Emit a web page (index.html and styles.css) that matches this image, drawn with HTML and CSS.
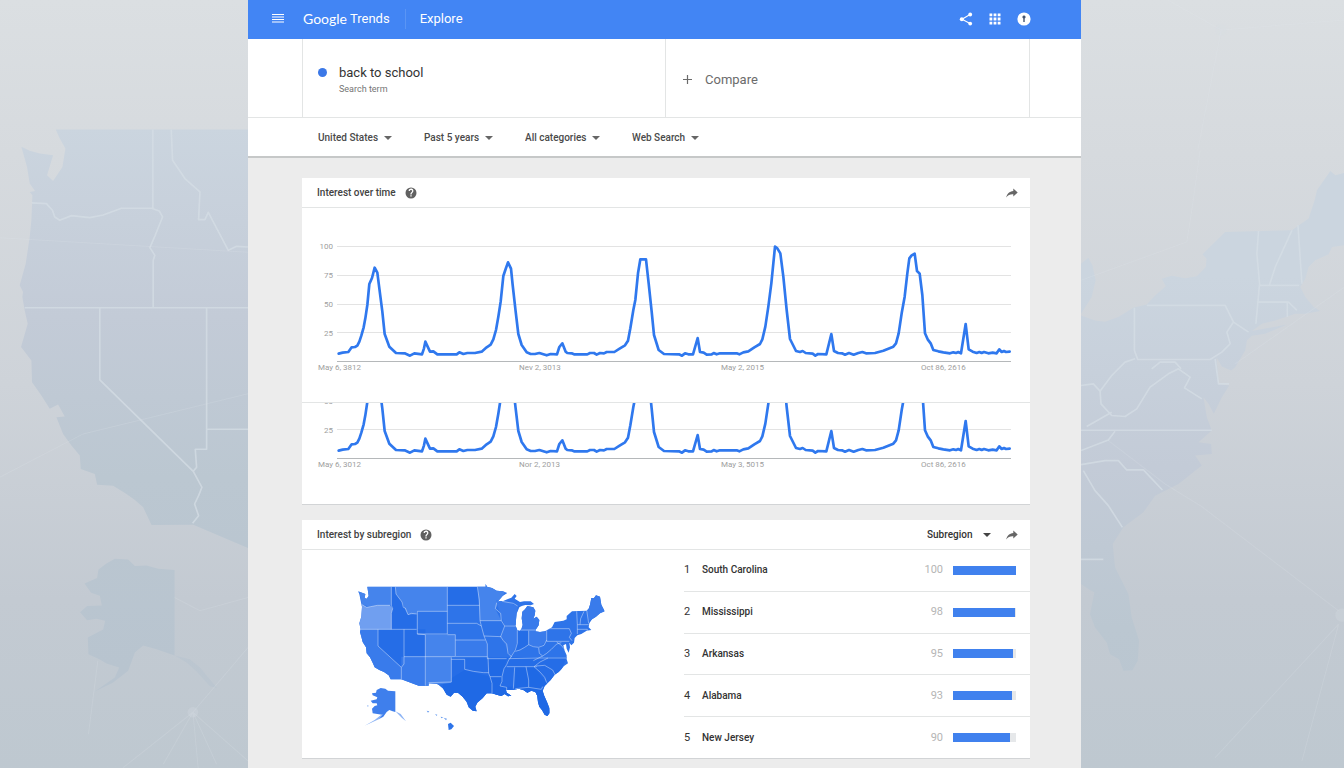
FILE: index.html
```html
<!DOCTYPE html>
<html lang="en">
<head>
    <meta charset="UTF-8">
    <meta name="viewport" content="width=device-width, initial-scale=1.0">
    <title>back to school - Explore - Google Trends</title>
    <link rel="stylesheet" href="styles.css">
</head>
<body>

    <!-- Left backdrop: west coast and Alaska -->
    <div class="backdrop">
        <svg class="backdrop-map" viewBox="0 0 744 2304" preserveAspectRatio="xMaxYMin slice" aria-hidden="true">
            <defs>
                <linearGradient id="land" gradientUnits="userSpaceOnUse" x1="0" y1="380" x2="0" y2="2000">
                    <stop offset="0" stop-color="#cbd5df"/>
                    <stop offset="0.35" stop-color="#c3cbd7"/>
                    <stop offset="0.65" stop-color="#bbc7d1"/>
                    <stop offset="1" stop-color="#b8c4cf"/>
                </linearGradient>
            </defs>
            <path fill="url(#land)" d="M168 388H744V1642L580 1572 455 1573 430 1520 405 1498 380 1480 340 1455 292 1452 285 1420 243 1405 240 1365 215 1335 190 1300 170 1250 195 1248 175 1212 150 1225 125 1185 97 1145 95 1080 64 1040 84 970 75 930 68 890 70 875 60 855 78 790 90 710 95 660 98 585 90 575 106 572 90 550 82 500 65 440 90 452 120 460 160 465 142 525 160 542 188 500 197 445 180 415Z"/>
            <g class="backdrop-lines">
                <path d="M96 608L140 610 158 630 165 650 180 660 215 646 270 652 310 644 365 624H455L478 632 488 650 466 705 450 742 465 765 460 780V922M459 388V624M75 922H744M514 388L518 480 555 535 600 575 596 658 615 658 625 636 685 750 710 738 744 740M300 922V1138L580 1412M620 922V1346H586L590 1400 580 1412 606 1460 596 1485 584 1510 596 1545 578 1568M620 1286H744"/>
            </g>
            <path fill="url(#land)" d="M345 1674L385 1676 405 1696 440 1694 475 1704 524 1708V1964L470 1945 430 1934 405 1955 385 2010 340 2045 285 2072 345 2030 358 2000 320 1988 300 1976 266 1960 264 1910 310 1886 316 1860 290 1854 262 1858 241 1834 262 1816 306 1814 300 1785 274 1776 254 1748 292 1732 296 1706 320 1688Z"/>
            <path fill="url(#land)" opacity="0.6" d="M524 1964L570 1975 600 2000 652 2062 630 2056 590 2012 560 1985Z"/>
            <circle class="backdrop-node" cx="579" cy="2134" r="16"/>
            <g class="backdrop-threads">
                <path d="M0 712L744 756M0 1430L250 1300 744 1180M579 2134L370 2300M579 2134L490 2290M579 2134L595 2304M579 2134L650 2290M579 2134L744 2280M579 2134L744 1940M524 1790L600 1830 744 1790M294 1980L266 2200"/>
            </g>
        </svg>
    </div>

    <div class="app">
        <!-- Top bar -->
        <header class="topbar">
            <button class="icon-btn" aria-label="Menu">
                <svg width="12" height="10" viewBox="0 0 12 10"><path stroke="#fff" stroke-width="1" d="M0 .5H12M0 3H12M0 5.500H12M0 8H12"/></svg>
            </button>
            <a class="brand" href="#"><span class="brand-google">Google</span><span class="brand-trends">Trends</span></a>
            <a class="section-name" href="#">Explore</a>
            <div class="topbar-actions">
                <button class="icon-btn" aria-label="Share">
                    <svg width="14" height="14" viewBox="0 0 14 14" fill="#fff"><path fill="none" stroke="#fff" stroke-width="1.1" d="M11 2.5L3 7.2 11 11.6"/><circle cx="2.8" cy="7.2" r="2"/><circle cx="11.2" cy="2.5" r="1.9"/><circle cx="11.2" cy="11.6" r="1.9"/></svg>
                </button>
                <button class="icon-btn" aria-label="Google apps">
                    <svg width="12" height="12" viewBox="0 0 12 12" fill="#fff"><path d="M.5.5h2.8v2.8H.5zM4.600.5h2.8v2.8H4.600zM8.700.5h2.8v2.8H8.700zM.5 4.600h2.8v2.8H.5zM4.600 4.600h2.8v2.8H4.600zM8.700 4.600h2.8v2.8H8.700zM.5 8.700h2.8v2.8H.5zM4.600 8.700h2.8v2.8H4.600zM8.700 8.700h2.8v2.8H8.700z"/></svg>
                </button>
                <button class="icon-btn" aria-label="Account">
                    <svg width="14" height="14" viewBox="0 0 14 14"><circle cx="7" cy="7" r="6.6" fill="#fff"/><path fill="#44546f" d="M7 3.4a1.7 1.7 0 0 1 .7 3.2V10H6.3V6.600A1.700 1.700 0 0 1 7 3.400z"/></svg>
                </button>
            </div>
        </header>

        <!-- Search terms -->
        <section class="terms">
            <div class="term">
                <span class="term-dot"></span>
                <div>
                    <h1 class="term-name">back to school</h1>
                    <p class="term-type">Search term</p>
                </div>
            </div>
            <button class="compare">
                <svg width="9" height="9" viewBox="0 0 9 9"><path stroke="#6b6b6b" stroke-width="1.2" d="M4.500 0V9M0 4.500H9"/></svg>
                Compare
            </button>
        </section>

        <!-- Filters -->
        <form class="filters">
            <label class="picker"><select aria-label="Region"><option>United States</option></select></label>
            <label class="picker"><select aria-label="Time range"><option>Past 5 years</option></select></label>
            <label class="picker"><select aria-label="Category"><option>All categories</option></select></label>
            <label class="picker"><select aria-label="Search type"><option>Web Search</option></select></label>
        </form>

        <main class="content">
            <!-- Interest over time -->
            <section class="card">
                <div class="card-head">
                    <h2>Interest over time</h2>
                    <button class="icon-btn" aria-label="Help">
                        <svg width="12" height="12" viewBox="0 0 24 24"><path fill="#616161" d="M12 1a11 11 0 1 0 0 22 11 11 0 0 0 0-22zm1.300 18h-2.600v-2.600h2.600zm2.700-8.500-1.200 1.200c-1 1-1.500 1.800-1.500 3.500h-2.600v-.7c0-1.300.5-2.500 1.500-3.500l1.500-1.500a2.200 2.200 0 1 0-3.900-1.500H7.200a4.800 4.800 0 1 1 8.800 2.500z"/></svg>
                    </button>
                    <button class="icon-btn push" aria-label="Share chart">
                        <svg width="12" height="10" viewBox="0 0 12 10"><path fill="#666" d="M7.300.6L11.700 4.500 7.300 8.600V6.200C4.400 6 2 6.800.2 9.400.9 5.800 3.400 3.300 7.300 2.900z"/></svg>
                    </button>
                </div>
                <svg class="chart" viewBox="0 0 728 194">
                    <defs>
                        <polyline id="trend" class="trend" transform="translate(-2 -38) scale(.333333)" points="116,551 128,548 145,546 155,532 165,531 172,527 178,515 184,497 191,472 196,445 202,405 208,342 216,324 224,293 232,308 238,355 247,425 254,492 268,530 288,549 314,550 330,557 343,550 366,553 372,535 376,515 390,545 400,544 412,553 470,553 478,547 490,552 502,549 525,549 545,545 560,532 572,524 580,508 588,480 595,440 602,395 610,318 617,297 624,277 633,296 638,345 647,425 655,492 665,525 680,547 692,552 705,552 718,549 740,556 752,552 771,553 778,531 787,520 797,545 802,549 815,550 822,553 862,553 870,549 882,549 890,554 900,549 912,550 920,546 943,546 960,535 975,526 984,512 991,475 1000,420 1006,390 1014,310 1021,268 1038,268 1046,340 1055,425 1062,495 1076,540 1092,552 1137,553 1146,557 1155,550 1165,553 1179,553 1193,504 1200,546 1211,548 1220,554 1235,553 1241,549 1250,553 1260,550 1310,550 1318,553 1330,547 1345,544 1363,532 1380,522 1387,508 1396,470 1405,410 1414,340 1420,280 1425,230 1432,235 1441,250 1450,320 1460,420 1470,507 1488,543 1500,546 1508,543 1517,549 1538,551 1546,557 1554,552 1579,553 1594,492 1602,543 1614,549 1626,550 1635,554 1647,549 1661,554 1675,549 1687,546 1698,550 1725,549 1750,542 1780,530 1788,520 1796,490 1805,430 1814,380 1822,310 1828,265 1835,256 1844,251 1851,303 1859,311 1867,375 1875,490 1883,508 1892,520 1900,540 1915,544 1930,547 1950,550 1960,547 1968,549 1975,546 1983,550 1997,462 2006,538 2018,545 2030,549 2038,546 2045,549 2052,546 2065,550 2078,548 2090,550 2098,538 2105,546 2112,543 2118,546 2129,545"/>
                    </defs>
                    <path class="grid-line" d="M35 38.500H709M35 67.500H709M35 96.500H709M35 124.500H709"/>
                    <path class="axis-line" d="M35 153.500H709"/>
                    <g class="axis-text axis-y">
                        <text x="31" y="41">100</text>
                        <text x="31" y="70">75</text>
                        <text x="31" y="99">50</text>
                        <text x="31" y="128">25</text>
                    </g>
                    <g class="axis-text">
                        <text x="16" y="162">May 6, 3812</text>
                        <text x="217" y="162">Nev 2, 3013</text>
                        <text x="419" y="162">May 2, 2015</text>
                        <text x="619" y="162">Oct 86, 2616</text>
                    </g>
                    <use href="#trend"/>
                </svg>
                <svg class="chart chart-lower" viewBox="0 98 728 101">
                    <path class="grid-line" d="M35 124.500H709"/>
                    <path class="axis-line" d="M35 153.500H709"/>
                    <g class="axis-text axis-y">
                        <text x="31" y="99">50</text>
                        <text x="31" y="128">25</text>
                    </g>
                    <g class="axis-text">
                        <text x="16" y="162">May 6, 3012</text>
                        <text x="217" y="162">Nor 2, 2013</text>
                        <text x="419" y="162">May 3, 5015</text>
                        <text x="619" y="162">Oct 86, 2616</text>
                    </g>
                    <use href="#trend"/>
                </svg>
            </section>

            <!-- Interest by subregion -->
            <section class="card">
                <div class="card-head">
                    <h2>Interest by subregion</h2>
                    <button class="icon-btn" aria-label="Help">
                        <svg width="12" height="12" viewBox="0 0 24 24"><path fill="#616161" d="M12 1a11 11 0 1 0 0 22 11 11 0 0 0 0-22zm1.300 18h-2.600v-2.600h2.600zm2.700-8.500-1.200 1.200c-1 1-1.500 1.800-1.500 3.500h-2.600v-.7c0-1.300.5-2.500 1.500-3.500l1.500-1.500a2.200 2.200 0 1 0-3.900-1.500H7.200a4.800 4.800 0 1 1 8.800 2.500z"/></svg>
                    </button>
                    <label class="picker picker-level push"><select aria-label="Level"><option>Subregion</option></select></label>
                    <button class="icon-btn" aria-label="Share map">
                        <svg width="12" height="10" viewBox="0 0 12 10"><path fill="#666" d="M7.300.6L11.700 4.500 7.300 8.600V6.200C4.400 6 2 6.800.2 9.400.9 5.800 3.400 3.300 7.300 2.900z"/></svg>
                    </button>
                </div>
                <div class="region-body">
                    <div class="map-wrap">
                        <svg class="us-map" viewBox="0 0 840 510" role="img" aria-label="Interest by state">
                            <defs>
                                <clipPath id="mainland">
                                    <path d="M82 50H437V42L441 50 456 54 470 62 488 64 502 69 488 78 470 98 478 93 488 94 502 88 514 83 524 72 530 78 524 86 540 96 552 94 572 94 582 102 572 106 556 105 545 108 538 112 533 124 530 130 528 150 527 168 532 180 538 183 544 178 548 165 545 145 547 125 555 118 562 108 580 112 586 122 584 136 580 146 590 140 598 150 596 166 588 178 586 184 600 186 615 184 636 172 644 156 670 152 680 148 680 138 696 124 740 122 746 116 750 104 754 84 762 84 768 76 780 80 784 104 794 124 780 130 768 140 756 148 748 160 746 172 754 180 740 182 724 192 712 196 704 204 702 218 694 226 688 218 690 232 686 248 680 236 678 222 670 226 674 242 680 256 680 268 684 280 672 288 664 298 656 306 644 314 632 330 622 340 614 348 608 362 612 376 622 398 628 414 628 430 622 438 614 434 606 420 598 410 594 396 592 378 586 366 574 362 562 368 550 360 536 356 520 359 498 360 500 368 514 377 504 379 494 372 484 378 470 374 456 370 440 370 428 384 412 398 406 410 410 424 398 422 386 412 380 396 368 380 354 368 342 368 332 380 320 374 310 356 296 344 290 341 266 340V347H236L184 328H152L146 316 132 306 118 300 104 292 98 278 90 262 80 250 78 232 68 216 64 200 60 186 62 178 58 160 64 140 66 110 62 92 58 72 54 64 66 68 76 72 74 84 80 86 86 78 84 64Z"/>
                                </clipPath>
                            </defs>
                            <g clip-path="url(#mainland)">
                                <path fill="#2e74e9" d="M0 0H840V510H0Z"/>
                                <path class="tone-dark" d="M154 50H166L168 72 186 96 194 116 204 134 230 132V178H154ZM114 178H256V260H192V282L184 292 114 228ZM322 50H412L420 106H322ZM442 262H680L660 310 620 350 640 450H560V390H380L290 360V340H334V262ZM532 180H566V224L526 244Z"/>
                                <path class="tone-deep" d="M446 266H500L486 320 486 350H526V292H582L640 450H300L310 340 374 300 450 320ZM526 290H582L624 345 560 356Z"/>
                                <path class="tone-mid" d="M54 50H154V106L112 106 92 110 66 104ZM166 50H322V124H230V132L204 134 194 116 186 96 168 72ZM412 40H510L466 116 484 152H420ZM256 194H346V260H334V338L266 348H256Z"/>
                                <path class="tone-soft" d="M184 260H256V348H184ZM468 90L498 94 532 108V166H494L480 130ZM50 178H114V228L184 292V330H40ZM346 210H436L442 222V258H346ZM566 182H620V212L596 232 566 224ZM494 168H532V220L512 262 484 200ZM545 108H600V182H540ZM750 60H800V150L746 150 740 120Z"/>
                                <path class="tone-light" d="M50 104H66L80 112 112 106H150L158 116 154 130V178H50Z"/>
                                <path class="state-lines" d="M66 104L80 112 92 110 112 106H150M154 50V106L158 116 154 130V178M60 178H230M166 50L168 72 186 96 190 112 196 114 204 134 214 130 230 132M322 124H232V192H322V50M322 194H346V258M232 192L256 194V347M114 178V228L184 292V328M192 178V282L184 292M192 260H442M334 262V336L266 338M334 268H374V298L400 304 430 308 446 308M322 106H418M322 160H410L424 168M412 50L418 90 420 152H484M420 152L424 168 432 198 484 200M346 210H436M432 198L442 222V266H500M444 262L446 310 450 320H484M450 320L456 340 456 370M484 152L494 168 482 200 490 212 500 222 504 250 514 260 506 270 500 284 492 296 486 320V334L480 348 500 352V360M470 98L466 116 482 130 484 152M494 168H528M486 94L520 100 533 108M532 180V220L526 240 512 262M566 182V224M538 180H588M526 244L540 240 554 232 566 224 580 230 596 232 612 226 620 210M506 266L596 264H680M500 290H590M582 290L600 276 624 264M524 292L520 356M558 290L566 330V352M526 356L566 352 604 358 608 350M582 290L600 306 614 322 620 338M588 288L614 286 624 292 638 300 646 316M620 176V214H688M620 176H688L694 190 688 202 696 212M596 234L598 250 608 258 620 250 634 238 650 222 664 218M608 258L580 272M710 124L712 164V192M732 124L722 146 720 164M740 120L746 160M712 164H746M712 178H742V186M650 216L664 226 672 236"/>
                            </g>
                            <!-- Alaska -->
                            <path fill="#3f7fec" d="M122 354L136 356 144 362 166 364V426L158 424 148 420 140 426 130 440 116 448 126 434 112 432 98 430 96 416 104 408 112 406 110 400 98 400 92 392 110 388 112 382 98 376 96 370 108 368 110 360Z"/>
                            <path fill="#8db4f5" d="M130 432L116 448 74 467 104 450 122 436ZM166 424L182 432 198 454 186 444ZM82 405L87 408 82 410Z"/>
                            <!-- Hawaii -->
                            <path fill="#2e74e9" d="M324 462L332 458 342 468 334 478 326 480Z"/>
                            <path fill="#6d9ff0" d="M260 422L268 424 264 428ZM285 432L292 434 290 438ZM302 440L310 442 304 445ZM311 443L321 446 318 451Z"/>
                        </svg>
                    </div>
                    <ol class="regions">
                        <li><span class="rank">1</span><span class="region-name">South Carolina</span><span class="score">100</span><span class="bar"><span class="bar-fill" style="width: 100%"></span></span></li>
                        <li><span class="rank">2</span><span class="region-name">Mississippi</span><span class="score">98</span><span class="bar"><span class="bar-fill" style="width: 98%"></span></span></li>
                        <li><span class="rank">3</span><span class="region-name">Arkansas</span><span class="score">95</span><span class="bar"><span class="bar-fill" style="width: 95%"></span></span></li>
                        <li><span class="rank">4</span><span class="region-name">Alabama</span><span class="score">93</span><span class="bar"><span class="bar-fill" style="width: 93%"></span></span></li>
                        <li><span class="rank">5</span><span class="region-name">New Jersey</span><span class="score">90</span><span class="bar"><span class="bar-fill" style="width: 90%"></span></span></li>
                    </ol>
                </div>
            </section>
        </main>
    </div>

    <!-- Right backdrop: east coast -->
    <div class="backdrop">
        <svg class="backdrop-map" viewBox="0 0 789 2304" preserveAspectRatio="xMinYMin slice" aria-hidden="true">
            <g transform="translate(-18 450)">
                <path fill="url(#land)" d="M18 340L40 322 52 345 62 390 50 440 18 490ZM18 495L60 510 90 514 130 500 175 472 215 462 240 435 272 408 260 385 290 376 330 384 365 378 392 350 394 325 382 312 450 245 650 240 700 205 718 150 725 120 765 62 780 75 807 68V285L770 290 760 312 720 330 700 350 690 385 675 410 690 440 715 470 735 482 690 490 660 490 600 510 560 520 530 542 635 522 570 550 530 556 515 570 510 600 480 650 468 660 440 648 424 620 430 700 462 705 440 740 416 790 400 760 385 740 395 800 410 840 370 875 408 880 410 910 360 915 380 945 310 1000 270 1020 240 1035 205 1085 145 1130 113 1180 120 1250 160 1330 170 1400 192 1470 188 1530 172 1558 145 1560 132 1525 105 1510 95 1475 60 1430 45 1390 58 1325 40 1315 18 1300Z"/>
                <path class="backdrop-lines" d="M215 465H450L475 515 455 545 465 580 440 605 405 627H188L178 600V472M475 515L520 545M550 242L545 310 553 400 542 520M650 240L600 350 583 403M668 225L680 400M553 405H672M545 455H640L665 480M636 458V500M18 705L55 700 75 722 110 675 150 635 180 625M75 722L78 760 110 795 150 798 185 775 225 710 280 670 310 655 345 680 328 712 380 745M230 655L255 635 300 635 318 655M110 785L35 828M18 839H410M120 842L100 868 18 900M18 942L90 930H130L155 958H205L262 1018M25 960L60 1020 100 1065 142 1130M18 1226H85M420 625L430 700H462"/>
                <path class="backdrop-threads" d="M375 0L350 180 335 275 18 390M807 410L480 640M100 870L270 1000 380 1068 790 1380M790 1420L420 1820M790 1420L680 1830"/>
                <circle class="backdrop-node" cx="800" cy="1393" r="20"/>
            </g>
            <path class="backdrop-threads" d="M350 450L420 90 789 60M420 90L260 0"/>
            <circle class="backdrop-node" cx="420" cy="90" r="18" opacity="0.5"/>
        </svg>
    </div>

</body>
</html>
```
FILE: styles.css
```css
* {
    box-sizing: border-box;
}

body {
    margin: 0;
    min-height: 100vh;
    display: grid;
    grid-template-columns: 248px minmax(0, 1fr) 263px;
    font-family: Roboto, Arial, sans-serif;
    color: #424242;
    background: linear-gradient(#dbdfe2 0%, #d6dade 20%, #ced3d9 50%, #c3cad2 78%, #bec8d0 100%);
}

h1, h2, p, ol {
    margin: 0;
    padding: 0;
    font-weight: normal;
}

button, select {
    font-family: inherit;
    border: none;
    background: none;
    padding: 0;
    margin: 0;
    cursor: pointer;
}

/* Backdrop maps */
.backdrop {
    position: relative;
    overflow: hidden;
}

.backdrop-map {
    position: absolute;
    inset: 0;
    width: 100%;
    height: 100%;
}

.backdrop-lines {
    fill: none;
    stroke: #d6dee6;
    stroke-width: 5;
    stroke-opacity: 0.7;
    stroke-linejoin: round;
}

.backdrop-threads {
    fill: none;
    stroke: #e4e8ec;
    stroke-width: 3;
    stroke-opacity: 0.18;
}

.backdrop-node {
    fill: #d4dbe2;
    fill-opacity: 0.3;
}

/* App column */
.app {
    background-color: #ececec;
}

.icon-btn {
    display: flex;
    align-items: center;
}

.push {
    margin-left: auto;
}

/* Top bar */
.topbar {
    display: flex;
    align-items: center;
    height: 39px;
    padding: 0 50px 2px 24px;
    background-color: #4285f4;
    color: #fff;
}

.brand {
    display: flex;
    align-items: center;
    gap: 3px;
    margin-left: 19px;
    color: #fff;
    font-size: 13px;
    line-height: 20px;
    text-decoration: none;
}

.brand-google {
    font-family: Lato, sans-serif;
    font-size: 14px;
}

.section-name {
    margin-left: 15px;
    padding-left: 14px;
    border-left: 1px solid #5a95f5;
    color: #fff;
    font-size: 13px;
    line-height: 20px;
    text-decoration: none;
}

.topbar-actions {
    display: flex;
    align-items: center;
    gap: 16px;
    margin-left: auto;
}

/* Search terms */
.terms {
    display: grid;
    grid-template-columns: 1fr 1fr;
    height: 79px;
    padding: 0 51px 0 54px;
    background-color: #fff;
    border-bottom: 1px solid #e3e5e5;
}

.term {
    display: flex;
    gap: 12px;
    padding: 24px 15px 0;
    border-left: 1px solid #e3e5e5;
    border-right: 1px solid #e3e5e5;
}

.term-dot {
    width: 9px;
    height: 9px;
    margin-top: 5px;
    border-radius: 50%;
    background-color: #3b78e7;
}

.term-name {
    font-size: 13px;
    line-height: 20px;
    color: #333;
}

.term-type {
    font-size: 9px;
    line-height: 12px;
    color: #757575;
}

.compare {
    display: flex;
    align-items: center;
    gap: 13px;
    padding: 2px 17px 0;
    border-right: 1px solid #e3e5e5;
    font-size: 13px;
    color: #6b6b6b;
}

/* Filters */
.filters {
    display: flex;
    gap: 32px;
    height: 40px;
    padding: 2px 70px 0;
    background-color: #fff;
    border-bottom: 2px solid #c6c8c8;
}

.picker {
    display: flex;
    align-items: center;
    gap: 5px;
}

.picker select {
    appearance: none;
    font-size: 10px;
    font-weight: 500;
    line-height: 16px;
    color: #4a4a4a;
}

.picker::after {
    content: "";
    border: 4px solid transparent;
    border-top: 4px solid #666;
    border-bottom: none;
}

.picker-level {
    gap: 10px;
    margin-right: 15px;
}

.picker-level select {
    color: #333;
}

.picker-level::after {
    border-top-color: #444;
}

/* Cards */
.content {
    display: flex;
    flex-direction: column;
    gap: 15px;
    padding: 20px 51px 10px 54px;
}

.card {
    background-color: #fff;
    border-bottom: 1px solid #d2d4d6;
}

.card-head {
    display: flex;
    align-items: center;
    height: 30px;
    padding: 0 12px 0 15px;
    border-bottom: 1px solid #e3e5e5;
}

.card-head h2 {
    margin-right: 9px;
    font-size: 10px;
    font-weight: 500;
    line-height: 16px;
}

/* Line charts */
.chart {
    display: block;
    width: 100%;
}

.chart-lower {
    border-top: 1px solid #e3e5e5;
}

.trend {
    fill: none;
    stroke: #2f78ee;
    stroke-width: 8;
    stroke-linejoin: round;
    stroke-linecap: round;
}

.grid-line {
    stroke: #e3e3e3;
}

.axis-line {
    stroke: #b5b8ba;
}

.axis-text {
    font-size: 8px;
    fill: #9e9e9e;
}

.axis-y {
    text-anchor: end;
}

/* Subregion map and ranking */
.region-body {
    display: grid;
    grid-template-columns: 382px 1fr;
}

.map-wrap {
    padding: 20px 64px 18px 38px;
}

.us-map {
    display: block;
    width: 100%;
}

.state-lines {
    fill: none;
    stroke: #fff;
    stroke-opacity: 0.6;
    stroke-width: 2;
    stroke-linejoin: round;
}

.tone-deep {
    fill: #1f69e5;
}

.tone-dark {
    fill: #256de7;
}

.tone-mid {
    fill: #4584ec;
}

.tone-soft {
    fill: #397beb;
}

.tone-light {
    fill: #709ff0;
}

.regions {
    display: flex;
    flex-direction: column;
    list-style: none;
}

.regions li {
    flex: 1;
    display: flex;
    align-items: center;
    padding-right: 14px;
    border-bottom: 1px solid #e3e5e5;
    font-size: 11px;
    line-height: 16px;
    color: #333;
}

.regions li:last-child {
    border-bottom: none;
}

.rank {
    width: 18px;
}

.region-name {
    flex: 1;
    font-size: 10px;
    font-weight: 500;
}

.score {
    color: #b5b5b5;
    margin-right: 10px;
}

.bar {
    width: 63px;
    height: 9px;
    background-color: #e6e8ea;
}

.bar-fill {
    display: block;
    height: 100%;
    background-color: #4081ee;
}
```
